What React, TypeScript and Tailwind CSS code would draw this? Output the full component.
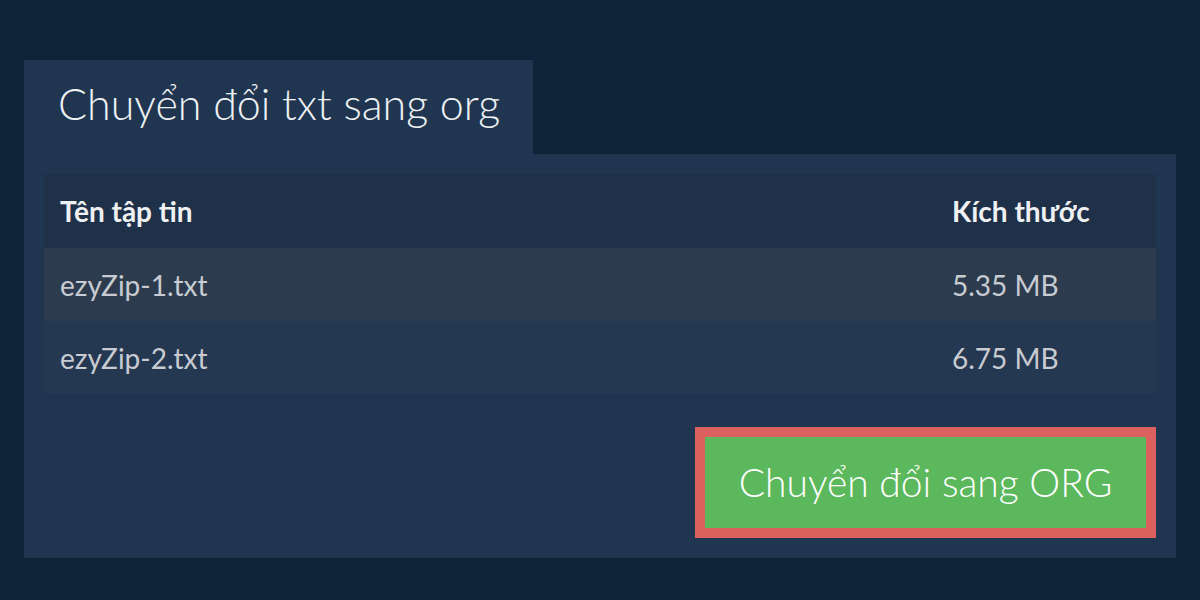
const files = [
  { name: 'ezyZip-1.txt', size: '5.35 MB' },
  { name: 'ezyZip-2.txt', size: '6.75 MB' },
];

export default function App() {
  return (
    <div
      className="w-[1200px] h-[600px] bg-[#0f2339] pt-[60px] px-6"
      style={{ fontFamily: 'Lato, "Noto Sans", sans-serif' }}
    >
      <div className="inline-block bg-[#203650] h-[94px] w-[509px] pl-[34px] pt-[17px]">
        <h1 className="text-[43px] font-light text-[#eef1f4] leading-[54px]">Chuyển đổi txt sang org</h1>
      </div>

      <div className="bg-[#203650] px-5 pt-5 pb-5">
        <table className="w-full border-collapse">
          <thead>
            <tr className="bg-[#1e3149] h-[74px]">
              <th className="text-left pl-4 text-[28px] font-bold text-[#eef0f2]">Tên tập tin</th>
              <th className="text-left pl-4 w-[220px] text-[28px] font-bold text-[#eef0f2]">Kích thước</th>
            </tr>
          </thead>
          <tbody>
            {files.map((f, i) => (
              <tr key={f.name} className={`h-[73px] ${i === 0 ? 'bg-[#2c3c4e]' : 'bg-[#253851]'}`}>
                <td className="pl-4 text-[28px] text-[#c8ccd2]">{f.name}</td>
                <td className="pl-4 text-[28px] text-[#c8ccd2]">{f.size}</td>
              </tr>
            ))}
          </tbody>
        </table>

        <div className="flex justify-end mt-[33px]">
          <button className="w-[461px] h-[111px] border-[10px] border-[#dc605e] bg-[#5cb85c] text-white text-[39px] font-light">
            Chuyển đổi sang ORG
          </button>
        </div>
      </div>
    </div>
  );
}
